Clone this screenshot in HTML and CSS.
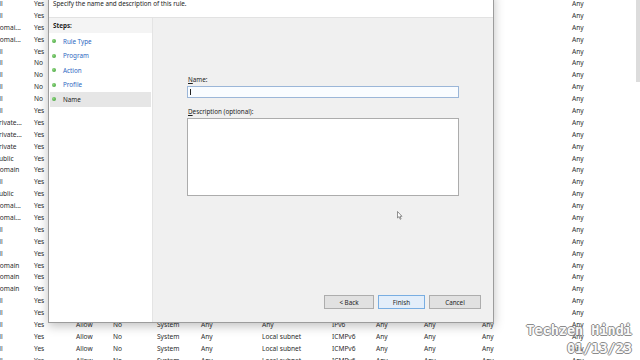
FILE: index.html
```html
<!DOCTYPE html>
<html lang="en">
<head>
  <meta charset="UTF-8" />
  <title>New Inbound Rule Wizard</title>
  <link rel="stylesheet" href="styles.css">
</head>
<body>
  <div class="screen">

    <div class="rules" id="rules"></div>

    <div class="wizard">
      <div class="wizard-head">Specify the name and description of this rule.</div>
      <div class="wizard-body">
        <div class="steps">
          <div class="steps-title">Steps:</div>
          <div class="step"><span class="dot"></span><span class="link">Rule Type</span></div>
          <div class="step"><span class="dot"></span><span class="link">Program</span></div>
          <div class="step"><span class="dot"></span><span class="link">Action</span></div>
          <div class="step"><span class="dot"></span><span class="link">Profile</span></div>
          <div class="step current"><span class="dot"></span><span>Name</span></div>
        </div>

        <div class="content">
          <div class="label"><u>N</u>ame:</div>
          <div class="input"><span class="caret"></span></div>
          <div class="label spaced"><u>D</u>escription (optional):</div>
          <div class="textarea"></div>

          <div class="buttons">
            <div class="btn back">&lt; Back</div>
            <div class="btn finish">Finish</div>
            <div class="btn cancel">Cancel</div>
          </div>
        </div>
      </div>
    </div>

    <svg class="pointer" width="6" height="9" viewBox="0 0 6 9">
      <path d="M0.5 0.5 L0.5 7 L2 5.6 L3.2 8.3 L4.1 7.9 L3 5.3 L5 5.3 Z" fill="#fff" stroke="#666" stroke-width="0.7"/>
    </svg>

    <div class="scroll-thumb"></div>

    <div class="watermark">
      <div>Techzen Hindi</div>
      <div>01/13/23</div>
    </div>
  </div>

  <script>
    const profiles = ["All", "All", "Domai...", "Domai...", "All", "All", "All", "All", "All", "All",
      "Private...", "Private...", "Private", "Public", "Domain", "All", "Public", "Domai...", "Domai...", "All",
      "All", "All", "Domain", "Domain", "Domain", "All", "All", "All", "All", "All", "All"];

    const rules = document.getElementById("rules");

    profiles.forEach((profile, i) => {
      const enabled = (i >= 5 && i <= 8) ? "No" : "Yes";
      let cells;
      if (i < 27) {
        // the wizard covers the middle columns of these rows
        cells = [profile, enabled, "", "", "", "", "", "", "", "", "", "Any"];
      } else {
        const remote = i === 27 ? "Any" : "Local subnet";
        const protocol = i === 27 ? "IPv6" : "ICMPv6";
        cells = [profile, enabled, "Allow", "No", "System", "Any", remote, protocol, "Any", "Any", "Any", "Any"];
      }

      const row = document.createElement("div");
      row.className = "rule";
      cells.forEach(text => {
        const cell = document.createElement("span");
        cell.textContent = text;
        row.appendChild(cell);
      });
      rules.appendChild(row);
    });
  </script>
</body>
</html>
```

FILE: styles.css
```css
* {
  box-sizing: border-box;
}

body {
  margin: 0;
  font-family: 'Noto Sans', 'DejaVu Sans', sans-serif;
  background: #fff;
  overflow: hidden;
}

.screen {
  position: relative;
  width: 640px;
  height: 360px;
  overflow: hidden;
}

/* firewall rule list behind the wizard */
.rules {
  margin-top: -2px;
  margin-left: -5px;
  font-size: 6.6px;
  color: #2b2b2b;
}

.rule {
  display: grid;
  grid-template-columns: 39px 42px 37px 44px 44px 61px 70px 44px 48px 58px 90px 1fr;
  height: 11.9px;
  line-height: 11.9px;
  white-space: nowrap;
}

/* wizard dialog */
.wizard {
  position: absolute;
  left: 48px;
  top: -8px;
  width: 446px;
  height: 331px;
  border: 1px solid #9c9c9c;
  background: #f0f0f0;
  box-shadow: 0 3px 10px rgba(0,0,0,0.25);
  display: flex;
  flex-direction: column;
  font-size: 6.3px;
  color: #1e1e1e;
}

.wizard-head {
  height: 25px;
  padding: 7px 0 0 4px;
  line-height: 8px;
  background: #fff;
  border-bottom: 1px solid #e2e2e2;
}

.wizard-body {
  flex: 1;
  display: flex;
}

.steps {
  width: 104px;
  background: #fff;
  border-right: 1px solid #e4e4e4;
}

.steps-title {
  height: 15px;
  line-height: 15px;
  padding-left: 4px;
  font-weight: bold;
  background: #f4f4f4;
  margin-bottom: 1px;
}

.step {
  display: flex;
  align-items: center;
  height: 14.5px;
  margin: 0 1px;
  padding-left: 2px;
}

.step.current {
  background: #e6e6e6;
}

.dot {
  width: 4px;
  height: 4px;
  border-radius: 50%;
  margin-right: 7px;
  background: radial-gradient(circle at 35% 35%, #8fd67f, #3a9d35);
}

.link {
  color: #2e68bf;
}

.content {
  flex: 1;
  display: flex;
  flex-direction: column;
  padding: 58px 12px 13px 34px;
}

.label {
  line-height: 8px;
  padding-left: 1px;
}

.label.spaced {
  margin-top: 10px;
}

.input {
  width: 272px;
  height: 12px;
  margin-top: 2px;
  padding: 2px 2px;
  border: 1px solid #9bb6d8;
  background: #f9fcff;
}

.caret {
  display: block;
  width: 1px;
  height: 6px;
  background: #222;
}

.textarea {
  width: 272px;
  height: 78px;
  margin-top: 2px;
  border: 1px solid #acacac;
  background: #fff;
}

.buttons {
  display: flex;
  justify-content: flex-end;
  gap: 4px;
  margin-top: auto;
}

.btn {
  height: 14px;
  display: flex;
  align-items: center;
  justify-content: center;
  border: 1px solid #adadad;
  background: #e1e1e1;
}

.back {
  width: 50px;
}

.finish {
  width: 47px;
  background: #e3eefa;
  border-color: #79aee2;
}

.cancel {
  width: 52px;
}

/* overlays */
.pointer {
  position: absolute;
  left: 397px;
  top: 211px;
}

.scroll-thumb {
  position: absolute;
  right: 0;
  top: 0;
  width: 4px;
  height: 82px;
  background: #dcdcdc;
}

.watermark {
  position: absolute;
  right: 8px;
  bottom: 3px;
  text-align: right;
  font-family: 'DejaVu Sans Mono', monospace;
  font-weight: bold;
  font-size: 13.5px;
  line-height: 18px;
  color: #fafafa;
  opacity: 0.85;
  text-shadow: 1px 0 #777, -1px 0 #777, 0 1px #777, 0 -1px #777;
}
```
